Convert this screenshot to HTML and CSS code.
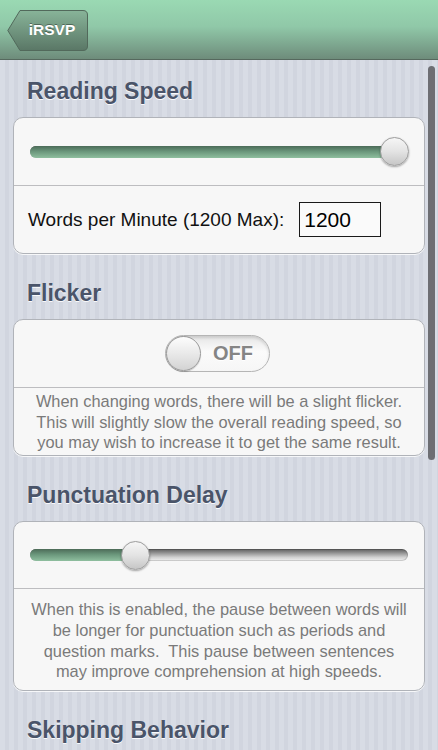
FILE: index.html
```html
<!DOCTYPE html>
<html lang="en">
<head>
  <meta charset="UTF-8" />
  <title>Settings - iRSVP</title>
  <link rel="stylesheet" href="styles.css">
</head>
<body>
  <div class="screen">
    <header class="navbar">
      <a class="back" href="#">
        <svg class="back-shape" viewBox="0 0 81 41" width="81" height="41">
          <defs>
            <linearGradient id="backFill" x1="0" y1="0" x2="0" y2="1">
              <stop offset="0" stop-color="#88b499" />
              <stop offset="1" stop-color="#5a7766" />
            </linearGradient>
          </defs>
          <path d="M13 0.5 H76 Q80.5 0.5 80.5 5 V36 Q80.5 40.5 76 40.5 H13 L0.8 20.5 Z" fill="url(#backFill)" stroke="#52695b" />
        </svg>
        <span>iRSVP</span>
      </a>
    </header>

    <main class="settings">
      <section class="group">
        <h2>Reading Speed</h2>
        <div class="card">
          <div class="row">
            <div class="slider" style="--v: 1.004">
              <div class="track"><div class="fill"></div></div>
              <div class="thumb"></div>
            </div>
          </div>
          <div class="row wpm">
            <label for="wpm">Words per Minute (1200 Max):</label>
            <input type="text" id="wpm" value="1200" />
          </div>
        </div>
      </section>

      <section class="group">
        <h2>Flicker</h2>
        <div class="card">
          <div class="row center">
            <div class="switch">
              <div class="knob"></div>
              <span>OFF</span>
            </div>
          </div>
          <p class="note tight">When changing words, there will be a slight flicker.<br>This will slightly slow the overall reading speed, so<br>you may wish to increase it to get the same result.</p>
        </div>
      </section>

      <section class="group">
        <h2>Punctuation Delay</h2>
        <div class="card">
          <div class="row short">
            <div class="slider" style="--v: 0.26">
              <div class="track"><div class="fill"></div></div>
              <div class="thumb"></div>
            </div>
          </div>
          <p class="note">When this is enabled, the pause between words will<br>be longer for punctuation such as periods and<br>question marks.&nbsp; This pause between sentences<br>may improve comprehension at high speeds.</p>
        </div>
      </section>

      <section class="group">
        <h2>Skipping Behavior</h2>
      </section>
    </main>

    <div class="scrollbar"></div>
  </div>
</body>
</html>
```

FILE: styles.css
```css
body {
  margin: 0;
  font-family: "Liberation Sans", Arial, sans-serif;
  background: #d6dae3;
}

.screen {
  position: relative;
  width: 438px;
  height: 750px;
  overflow: hidden;
  background: repeating-linear-gradient(90deg, #d8dce5 0 5px, #d1d5df 5px 9px);
}

.navbar {
  height: 59px;
  display: flex;
  align-items: center;
  padding-left: 7px;
  background: linear-gradient(#9ad9b3, #90c8a8 45%, #6e8c7b);
  border-bottom: 1px solid #56695e;
}

.back {
  position: relative;
  display: flex;
  align-items: center;
  justify-content: center;
  width: 81px;
  height: 41px;
  padding-left: 9px;
  box-sizing: border-box;
  margin-top: 1px;
  text-decoration: none;
}

.back-shape {
  position: absolute;
  left: 0;
  top: 0;
}

.back span {
  position: relative;
  color: white;
  font-weight: bold;
  font-size: 15.5px;
  text-shadow: 0 -1px 0 rgba(0, 0, 0, 0.35);
}

.settings {
  padding: 17px 13px 0 13px;
}

.group + .group {
  margin-top: 25px;
}

h2 {
  margin: 0 0 12px 14px;
  font-size: 23px;
  line-height: 28px;
  font-weight: bold;
  color: #4a5469;
  text-shadow: 0 1px 0 rgba(255, 255, 255, 0.9);
}

.card {
  background: #f7f7f7;
  border: 1px solid #b0b3b9;
  border-radius: 10px;
  box-shadow: 0 1px 0 rgba(255, 255, 255, 0.8);
}

.row {
  height: 67px;
  display: flex;
  align-items: center;
  padding: 0 16px;
  border-bottom: 1px solid #bdbdc0;
}

.row.short {
  height: 66px;
}

.row.center {
  justify-content: center;
}

.card > .row:last-child {
  border-bottom: none;
}

.slider {
  position: relative;
  flex: 1;
  height: 29px;
  display: flex;
  align-items: center;
}

.track {
  position: relative;
  flex: 1;
  height: 12px;
  border-radius: 6px;
  overflow: hidden;
  background: linear-gradient(#5d5d5d, #8e8e8e 30%, #d2d2d2 70%, #f2f2f2);
  box-shadow: inset 0 0 0 1px rgba(0, 0, 0, 0.15);
}

.fill {
  position: absolute;
  left: 0;
  top: 0;
  bottom: 0;
  width: calc(var(--v) * (100% - 29px) + 14px);
  background: linear-gradient(#4c6b58, #6a967b 45%, #8fbf9f);
}

.thumb {
  position: absolute;
  top: 0;
  left: calc(var(--v) * (100% - 29px));
  width: 27px;
  height: 27px;
  border-radius: 50%;
  border: 1px solid #9c9c9c;
  background: linear-gradient(#f6f6f6, #e3e3e3 50%, #c6c6c6);
  box-shadow: 0 1px 2px rgba(0, 0, 0, 0.35);
}

.wpm label {
  font-size: 19px;
  color: #111;
  margin-left: -2px;
}

.wpm input {
  margin-left: 15px;
  width: 82px;
  height: 35px;
  box-sizing: border-box;
  border: 1px solid #1a1a1a;
  border-radius: 0;
  padding: 0 0 0 4px;
  font-family: "Liberation Sans", Arial, sans-serif;
  font-size: 21px;
  color: #000;
  background: #fafafa;
}

.switch {
  position: relative;
  display: flex;
  align-items: center;
  width: 105px;
  height: 37px;
  box-sizing: border-box;
  border: 1px solid #b5b5b5;
  border-radius: 19px;
  background: linear-gradient(#e6e6e6, #fbfbfb 45%, #f6f6f6);
  box-shadow: inset 0 2px 3px rgba(0, 0, 0, 0.12);
  margin: -1px 0 0 -4px;
}

.knob {
  width: 35px;
  height: 35px;
  box-sizing: border-box;
  border-radius: 50%;
  border: 1px solid #9a9a9a;
  background: linear-gradient(#fdfdfd, #e9e9e9 50%, #d3d3d3);
  box-shadow: 0 1px 1px rgba(0, 0, 0, 0.2);
}

.switch span {
  flex: 1;
  text-align: center;
  padding-right: 3px;
  font-size: 20px;
  font-weight: bold;
  color: #858585;
  text-shadow: 0 1px 0 #fff;
}

.note {
  margin: 0;
  padding: 10px 0 8px;
  text-align: center;
  font-size: 16.4px;
  line-height: 20.7px;
  color: #7a7a7a;
}

.note.tight {
  padding: 3px 0 2px;
}

.scrollbar {
  position: absolute;
  left: 428px;
  top: 66px;
  width: 7px;
  height: 394px;
  border-radius: 4px;
  background: #6d6e73;
}
```
